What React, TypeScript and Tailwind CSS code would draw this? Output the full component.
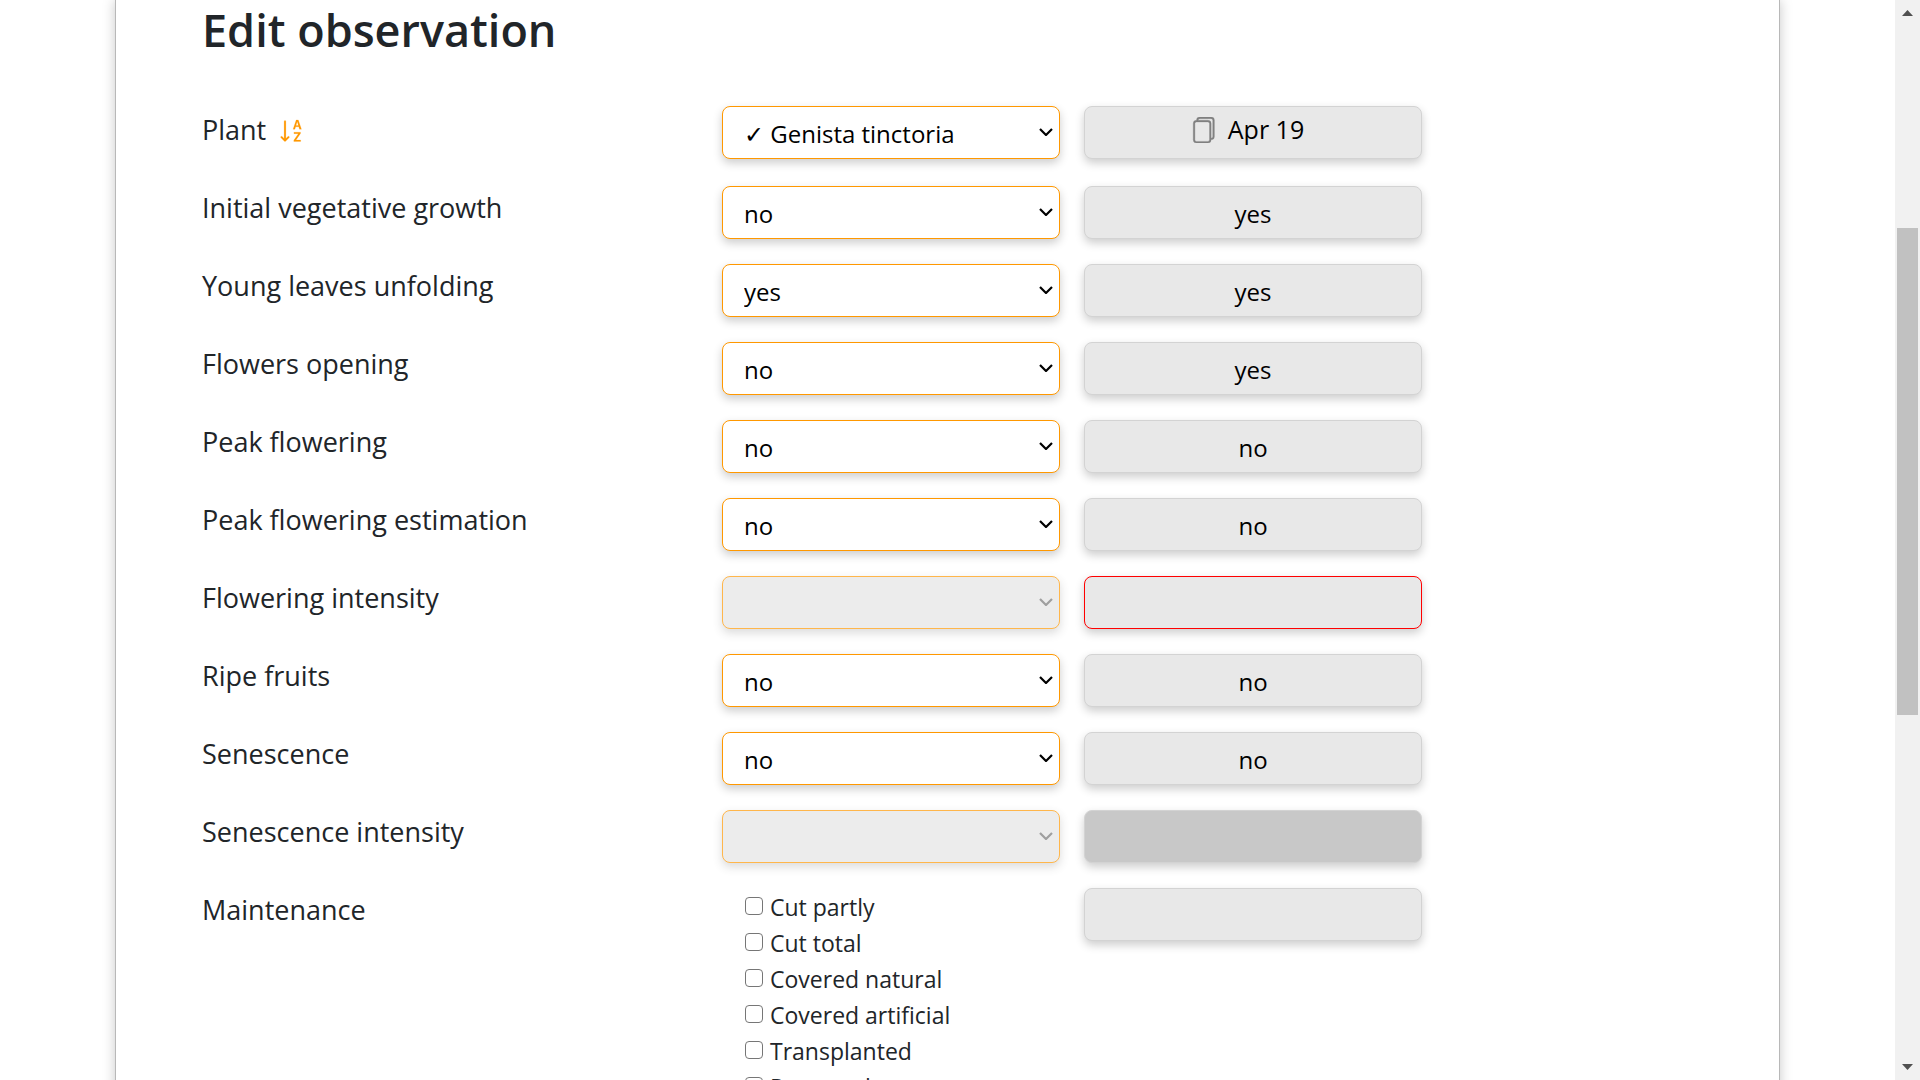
import { BsFiles, BsSortAlphaDown } from "react-icons/bs";

type Row = {
  id: string;
  label: string;
  value: string;
  previous: string;
  disabled?: boolean;
  tone?: "plain" | "alert" | "dark";
};

const rows: Row[] = [
  { id: "initial", label: "Initial vegetative growth", value: "no", previous: "yes" },
  { id: "leaves", label: "Young leaves unfolding", value: "yes", previous: "yes" },
  { id: "flowers", label: "Flowers opening", value: "no", previous: "yes" },
  { id: "peak", label: "Peak flowering", value: "no", previous: "no" },
  { id: "peak-estimation", label: "Peak flowering estimation", value: "no", previous: "no" },
  { id: "flowering-intensity", label: "Flowering intensity", value: "", previous: "", disabled: true, tone: "alert" },
  { id: "fruits", label: "Ripe fruits", value: "no", previous: "no" },
  { id: "senescence", label: "Senescence", value: "no", previous: "no" },
  { id: "senescence-intensity", label: "Senescence intensity", value: "", previous: "", disabled: true, tone: "dark" },
];

const maintenance = [
  "Cut partly",
  "Cut total",
  "Covered natural",
  "Covered artificial",
  "Transplanted",
  "Removed",
];

const grid = "grid grid-cols-[496fr_338fr_338fr_247fr] items-start gap-x-6";

const tones = {
  plain: "border-[#d3d3d3] bg-[#e8e8e8]",
  alert: "border-[#ff0000] bg-[#e8e8e8]",
  dark: "border-[#d3d3d3] bg-[#c8c8c8]",
};

function Select({ id, value, options, disabled }: { id: string; value: string; options: string[]; disabled?: boolean }) {
  return (
    <div className={disabled ? "relative opacity-70" : "relative"}>
      <select
        id={id}
        defaultValue={value}
        disabled={disabled}
        className="block h-[53px] w-full appearance-none rounded-lg border border-[#ff9800] bg-white pt-0.5 pr-10 pl-[21px] text-2xl text-black shadow-[0_4px_10px_rgba(0,0,0,0.2)] disabled:bg-[#e5e5e5]"
      >
        {options.map((o) => (
          <option key={o} value={o}>
            {o}
          </option>
        ))}
      </select>
      <svg
        viewBox="0 0 14 8"
        className="pointer-events-none absolute top-[22px] right-[7px] h-2 w-3.5"
        fill="none"
        stroke={disabled ? "#777" : "#000"}
        strokeWidth="2.2"
      >
        <path d="M1 1l6 6 6-6" />
      </svg>
    </div>
  );
}

function Previous({ text, tone = "plain" }: { text: string; tone?: "plain" | "alert" | "dark" }) {
  return (
    <div
      className={`flex h-[53px] items-center justify-center rounded-lg border pt-0.5 text-2xl text-black shadow-[0_4px_10px_rgba(0,0,0,0.2)] ${tones[tone]}`}
    >
      {text}
    </div>
  );
}

export default function App() {
  return (
    <div className="flex h-screen overflow-hidden bg-white font-['Open_Sans','Noto_Sans',sans-serif] text-[#212529]">
      <main className="mx-[115px] min-w-0 flex-1">
        <div className="min-h-full border-x border-[#b8b8b8] px-[86px] shadow-[0_0_12px_rgba(0,0,0,0.22)]">
          <h1 className="pt-0.5 text-[45px] leading-14 font-semibold">Edit observation</h1>
          <form className="pt-12">
            <div className={`${grid} mb-[27px]`}>
              <div className="flex h-[49px] items-center text-[27px]">
                <label htmlFor="plant">Plant</label>
                <button type="button" aria-label="Sort plants" className="ml-3 text-[#ff9800]">
                  <BsSortAlphaDown className="size-7" strokeWidth="0.1" />
                </button>
              </div>
              <Select id="plant" value="✓ Genista tinctoria" options={["✓ Genista tinctoria"]} />
              <button
                type="button"
                className="flex h-[53px] items-center justify-center gap-3 rounded-lg border border-[#d3d3d3] bg-[#e8e8e8] pr-3 pb-1.5 text-[25px] text-black shadow-[0_4px_10px_rgba(0,0,0,0.2)]"
              >
                <BsFiles className="size-[26px] text-[#808080]" strokeWidth="0.2" />
                Apr 19
              </button>
            </div>
            {rows.map((r) => (
              <div key={r.id} className={`${grid} mb-[25px]`}>
                <label htmlFor={r.id} className="flex h-[45px] items-center text-[27px]">
                  {r.label}
                </label>
                <Select
                  id={r.id}
                  value={r.value}
                  disabled={r.disabled}
                  options={r.disabled ? [""] : ["no", "yes"]}
                />
                <Previous text={r.previous} tone={r.tone} />
              </div>
            ))}
            <div className={grid} role="group" aria-labelledby="maintenance">
              <span id="maintenance" className="flex h-[45px] items-center text-[27px]">
                Maintenance
              </span>
              <div className="flex flex-col pl-[23px]">
                {maintenance.map((m) => (
                  <label key={m} className="flex h-9 items-center gap-[7px] text-[23px]">
                    <input
                      type="checkbox"
                      className="size-[18px] appearance-none rounded-sm border border-[#767676] bg-white checked:bg-[#0075ff]"
                    />
                    <span className="pt-0.5">{m}</span>
                  </label>
                ))}
              </div>
              <Previous text="" />
            </div>
          </form>
        </div>
      </main>
      <div className="flex w-[25px] flex-col items-center bg-[#f1f1f1]" aria-hidden="true">
        <svg viewBox="0 0 11 6" className="my-2.5 h-1.5 w-[11px] shrink-0 fill-[#505050]">
          <path d="M5.500 0L11 6H0z" />
        </svg>
        <div className="grow-[202]" />
        <div className="w-[21px] grow-[487] bg-[#c1c1c1]" />
        <div className="grow-[339]" />
        <svg viewBox="0 0 11 6" className="my-2.5 h-1.5 w-[11px] shrink-0 fill-[#505050]">
          <path d="M0 0h11L5.500 6z" />
        </svg>
      </div>
    </div>
  );
}
